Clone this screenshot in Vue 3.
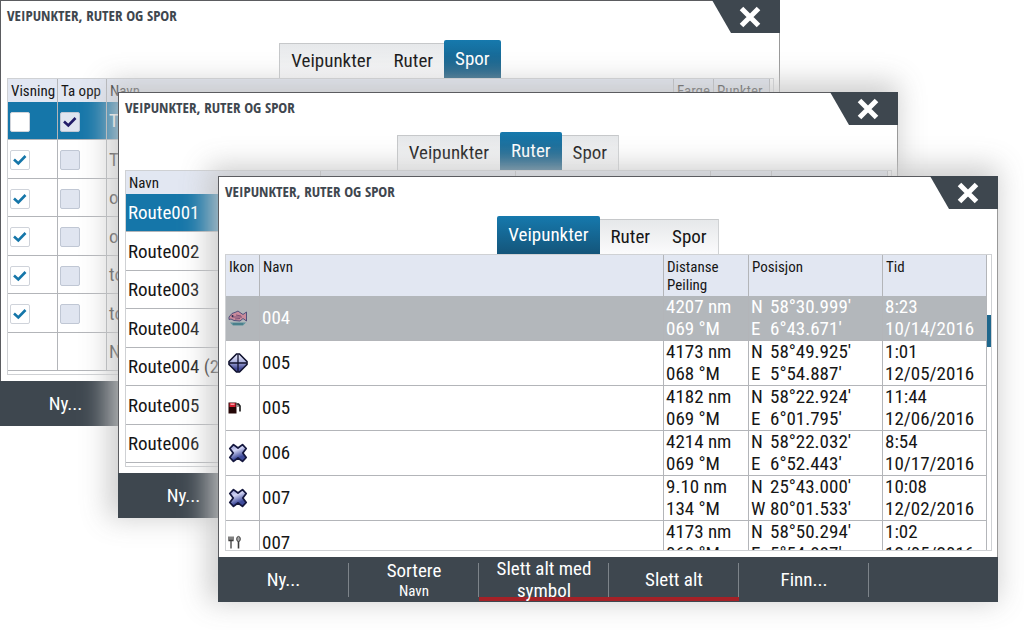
<script setup>
const tabs = ['Veipunkter', 'Ruter', 'Spor']

const tracks = [
  { shown: false, followed: true, name: 'Tr', selected: true },
  { shown: true, followed: false, name: 'Tr' },
  { shown: true, followed: false, name: 'o' },
  { shown: true, followed: false, name: 'o' },
  { shown: true, followed: false, name: 'to' },
  { shown: true, followed: false, name: 'to' },
  { blank: true, name: 'N' },
]

const routes = ['Route001', 'Route002', 'Route003', 'Route004', 'Route004 (2)', 'Route005', 'Route006']

const waypoints = [
  { icon: 'fish', name: '004', dist: '4207 nm', brg: '069 °M', lat: ['N', "58°30.999'"], lon: ['E', "6°43.671'"], time: '8:23', date: '10/14/2016', selected: true },
  { icon: 'diamond', name: '005', dist: '4173 nm', brg: '068 °M', lat: ['N', "58°49.925'"], lon: ['E', "5°54.887'"], time: '1:01', date: '12/05/2016' },
  { icon: 'fuel', name: '005', dist: '4182 nm', brg: '069 °M', lat: ['N', "58°22.924'"], lon: ['E', "6°01.795'"], time: '11:44', date: '12/06/2016' },
  { icon: 'cross', name: '006', dist: '4214 nm', brg: '069 °M', lat: ['N', "58°22.032'"], lon: ['E', "6°52.443'"], time: '8:54', date: '10/17/2016' },
  { icon: 'cross', name: '007', dist: '9.10 nm', brg: '134 °M', lat: ['N', "25°43.000'"], lon: ['W', "80°01.533'"], time: '10:08', date: '12/02/2016' },
  { icon: 'food', name: '007', dist: '4173 nm', brg: '068 °M', lat: ['N', "58°50.294'"], lon: ['E', "5°54.887'"], time: '1:02', date: '12/05/2016' },
]

const windows = [
  { id: 'tracks', active: 'Spor', actions: [{ label: 'Ny...' }] },
  { id: 'routes', active: 'Ruter', actions: [{ label: 'Ny...' }] },
  {
    id: 'waypoints',
    active: 'Veipunkter',
    actions: [
      { label: 'Ny...' },
      { label: 'Sortere', sub: 'Navn' },
      { label: 'Slett alt med symbol', danger: true },
      { label: 'Slett alt', danger: true },
      { label: 'Finn...' },
    ],
  },
]
</script>

<template>
  <main class="desktop">
    <section v-for="w in windows" :key="w.id" class="window" :class="w.id">
      <header class="head">
        <h2 class="title">VEIPUNKTER, RUTER OG SPOR</h2>
        <nav class="tabs">
          <button v-for="t in tabs" :key="t" type="button" class="tab" :class="{ active: t === w.active }">{{ t }}</button>
        </nav>
        <button type="button" class="close" aria-label="Lukk">
          <svg viewBox="0 0 24 24" width="24" height="24"><path d="M3.5 3.5L20.5 20.5M20.5 3.5L3.5 20.5" stroke="#fff" stroke-width="5" /></svg>
        </button>
      </header>

      <div class="list">
        <table v-if="w.id === 'tracks'" class="short">
          <colgroup><col class="c-show" /><col class="c-follow" /><col /><col class="c-color" /><col class="c-points" /></colgroup>
          <thead>
            <tr><th>Visning</th><th>Ta opp</th><th>Navn</th><th>Farge</th><th>Punkter</th></tr>
          </thead>
          <tbody>
            <tr v-for="(r, i) in tracks" :key="i" :class="{ selected: r.selected }">
              <td>
                <label v-if="!r.blank" class="check">
                  <input type="checkbox" :checked="r.shown" aria-label="Visning" />
                  <svg v-if="r.shown" viewBox="0 0 20 20" width="20" height="20"><path d="M4 9.5L8.3 13.5L15.5 6" /></svg>
                </label>
              </td>
              <td>
                <label v-if="!r.blank" class="check follow">
                  <input type="checkbox" :checked="r.followed" aria-label="Ta opp" />
                  <svg v-if="r.followed" viewBox="0 0 20 20" width="20" height="20"><path d="M4 9.5L8.3 13.5L15.5 6" /></svg>
                </label>
              </td>
              <td>{{ r.name }}</td><td></td><td></td>
            </tr>
          </tbody>
        </table>

        <table v-else-if="w.id === 'routes'" class="short">
          <colgroup><col class="c-name" /><col class="c-leg" /><col class="c-leg" /><col class="c-via" /><col /></colgroup>
          <thead>
            <tr><th>Navn</th><th></th><th></th><th></th><th></th></tr>
          </thead>
          <tbody>
            <tr v-for="(r, i) in routes" :key="r" :class="{ selected: i === 0 }">
              <td>{{ r }}</td><td></td><td></td><td></td><td></td>
            </tr>
          </tbody>
        </table>

        <table v-else class="tall">
          <colgroup><col class="c-icon" /><col /><col class="c-dist" /><col class="c-pos" /><col class="c-time" /></colgroup>
          <thead>
            <tr><th>Ikon</th><th>Navn</th><th>Distanse<br />Peiling</th><th>Posisjon</th><th>Tid</th></tr>
          </thead>
          <tbody>
            <tr v-for="(r, i) in waypoints" :key="i" :class="{ picked: r.selected }">
              <td class="icon">
                <svg v-if="r.icon === 'fish'" viewBox="0 0 20 20" width="20" height="20">
                  <path d="M2 14.5h16l-3 3H5z" fill="#5b929b" />
                  <path d="M5 16h10" stroke="#3a6f7c" />
                  <path d="M1 9L4 5.5L8 4L10 3L12 4.5L15 6.5L18.5 4V13L15 10.5L12 13L6 12.5L3 11L1 11.5z" fill="#c98b9b" stroke="#53507c" />
                  <path d="M4 9H14M8 7L13 8M7 11L12 10.5" stroke="#7b5076" />
                  <circle cx="4.5" cy="8" r="1" fill="#29264d" />
                </svg>
                <svg v-else-if="r.icon === 'diamond'" viewBox="0 0 20 20" width="20" height="20">
                  <defs><linearGradient id="dia" x1="0" y1="0" x2="0" y2="1"><stop offset="0.1" stop-color="#e2e4f8" /><stop offset="0.45" stop-color="#aab0dd" /><stop offset="0.8" stop-color="#454c98" /></linearGradient></defs>
                  <path d="M8.5 1H11.5L19 8.5V11.5L11.5 19H8.5L1 11.5V8.5z" fill="url(#dia)" stroke="#10122e" stroke-width="1.6" />
                  <path d="M10 1.5V18.5M1.5 10H18.5" stroke="#10122e" stroke-width="1.3" />
                </svg>
                <svg v-else-if="r.icon === 'fuel'" viewBox="0 0 20 20" width="20" height="20">
                  <path d="M0.5 4.5H8.5V15.5H0.5z" fill="#240607" />
                  <path d="M1.5 5H7.5V9H1.5z" fill="#d71f31" />
                  <path d="M2.5 5.5H6.5V7H2.5z" fill="#f0a0a5" />
                  <path d="M8.5 6H10.5L12 8V13.5" fill="none" stroke="#171717" stroke-width="1.6" />
                  <path d="M10 6V9" stroke="#333" />
                </svg>
                <svg v-else-if="r.icon === 'cross'" viewBox="0 0 20 20" width="20" height="20">
                  <defs><linearGradient id="crs" x1="0" y1="0" x2="0.4" y2="1"><stop offset="0.1" stop-color="#9da2d8" /><stop offset="0.4" stop-color="#d3d6f5" /><stop offset="0.85" stop-color="#3f4b9b" /></linearGradient></defs>
                  <path d="M5.5 1.6L1.8 5.5L5.2 10L1.8 14.5L5.5 18.4L10 15L14.5 18.4L18.2 14.5L14.8 10L18.2 5.5L14.5 1.6L10 5z" fill="url(#crs)" stroke="#15183f" stroke-width="1.8" stroke-linejoin="round" />
                </svg>
                <svg v-else viewBox="0 0 20 20" width="20" height="20">
                  <path d="M1 3.5V7.5H5V3.5M3 3.5V15.5" fill="none" stroke="#3d3d3d" stroke-width="1.3" />
                  <path d="M10.5 8V15.5" stroke="#3d3d3d" stroke-width="1.6" />
                  <ellipse cx="10.5" cy="6" rx="1.8" ry="2.6" fill="#aaa" stroke="#3d3d3d" />
                </svg>
              </td>
              <td>{{ r.name }}</td>
              <td>{{ r.dist }}<br />{{ r.brg }}</td>
              <td>
                <span class="hemi">{{ r.lat[0] }}</span>{{ r.lat[1] }}<br />
                <span class="hemi">{{ r.lon[0] }}</span>{{ r.lon[1] }}
              </td>
              <td>{{ r.time }}<br />{{ r.date }}</td>
            </tr>
          </tbody>
        </table>
        <div v-if="w.id === 'waypoints'" class="track"><div class="thumb"></div></div>
      </div>

      <footer class="actions">
        <button v-for="a in w.actions" :key="a.label" type="button" class="action" :class="{ danger: a.danger }">
          <span>{{ a.label }}</span>
          <small v-if="a.sub">{{ a.sub }}</small>
        </button>
      </footer>
    </section>
  </main>
</template>

<style>
body {
  background: #fff;
}
</style>

<style scoped>
.desktop {
  position: relative;
  min-height: 100vh;
  overflow: hidden;
  font-family: "Roboto Condensed", "Noto Sans", sans-serif;
  font-size: 19px;
  color: #161616;
}
.window {
  position: absolute;
  width: calc(100% - 244px);
  box-sizing: border-box;
  border: 1px solid #5b5c60;
  border-right-color: #999;
  border-bottom: 0;
  background: #fff;
}
.tracks { left: 0; top: 0; }
.routes { left: 118px; top: 92px; }
.waypoints { left: 218px; top: 176px; }
.routes,
.waypoints {
  box-shadow: -5px -5px 26px 5px rgba(200, 200, 200, 0.9);
}
.head {
  display: grid;
  grid-template-rows: 30px 47px;
}
.head > * { grid-column: 1; }
.title {
  grid-row: 1;
  margin: 0;
  padding-left: 6px;
  font-family: "Open Sans Condensed", "Noto Sans", sans-serif;
  font-size: 15px;
  line-height: 28px;
  font-weight: 700;
  color: #3f474f;
}
.tabs {
  grid-row: 2;
  display: flex;
  justify-content: center;
  align-items: flex-end;
}
button {
  border: 0;
  padding: 0;
  background: none;
  font: inherit;
  color: inherit;
}
.tab {
  height: 35px;
  padding: 0 11px 2px;
  border-top: 1px solid #c6c8ca;
  background: linear-gradient(#e6e8ea, #fbfbfc);
}
.tab:first-child { border-left: 1px solid #c6c8ca; }
.tab:last-child { border-right: 1px solid #d0d2d4; }
.tab.active {
  height: 38px;
  border: 0;
  border-radius: 2px 2px 0 0;
  background: linear-gradient(#1679ad, #14557a);
  color: #fff;
}
.close {
  grid-row: 1;
  justify-self: end;
  width: 68px;
  height: 33px;
  margin: -1px -1px 0 0;
  padding-left: 8px;
  background: #3e474f;
  clip-path: polygon(0 0, 100% 0, 100% 100%, 19px 100%);
}
.close svg { display: block; margin: 0 auto; }
.list {
  display: flex;
  height: 297px;
  box-sizing: border-box;
  margin: 0 5px 6px 6px;
  overflow: hidden;
  border: 1px solid #cfd1d4;
}
table {
  flex: 1;
  table-layout: fixed;
  border-collapse: separate;
  border-spacing: 0;
  width: 0;
  height: max-content;
}
th,
td {
  box-sizing: border-box;
  padding: 0 0 0 2px;
  overflow: hidden;
  border-right: 1px solid #b3b5b9;
  border-bottom: 1px solid #b3b5b9;
  text-align: left;
  white-space: nowrap;
}
th {
  padding: 3px 0 0 3px;
  border-bottom: 0;
  background: #e2e7f2;
  font-size: 15px;
  line-height: 18px;
  font-weight: 400;
  vertical-align: top;
}
.short { margin-right: 3px; }
.short th { height: 23px; }
.short td { height: 38px; }
.short tr:nth-child(even) td { height: 39px; }
.tall th { height: 41px; }
.tall td { height: 45px; line-height: 22px; }
.selected td { background: #1576a9; color: #fff; }
.picked td { background: #b3b7bb; color: #fff; }
.c-show { width: 50px; }
.c-follow { width: 49px; }
.c-color { width: 40px; }
.c-points { width: 56px; }
.c-name,
.c-leg { width: 195px; }
.c-via { width: 61px; }
.c-icon { width: 34px; }
.c-dist { width: 85px; }
.c-pos { width: 134px; }
.c-time { width: 104px; }
.routes td { border-right: 0; }
.icon svg { display: block; }
.hemi { display: inline-block; width: 19px; }
.check {
  display: inline-grid;
  vertical-align: middle;
}
.check > * { grid-area: 1 / 1; }
.check input {
  appearance: none;
  width: 20px;
  height: 20px;
  margin: 0;
  border: 1px solid #cfd3da;
  border-radius: 2px;
  background: #fff;
}
.check.follow input {
  border-color: #c0c7d4;
  background: #e0e5f0;
}
.check path {
  fill: none;
  stroke: #1576a9;
  stroke-width: 2.6;
}
.check.follow path { stroke: #221c68; }
.check svg { pointer-events: none; }
.track {
  width: 4px;
  padding-top: 60px;
}
.thumb {
  width: 4px;
  height: 32px;
  background: #1f678c;
}
.actions {
  display: flex;
  height: 45px;
  margin: 0 -1px;
  background: #3e474f;
  color: #fff;
}
.action {
  display: flex;
  flex: 0 0 131px;
  flex-direction: column;
  align-items: center;
  justify-content: center;
  padding: 0 8px;
  line-height: 22px;
  background:
    linear-gradient(#7d848a, #7d848a) right center / 1px 34px no-repeat;
}
.action + .action { flex-basis: 130px; }
.action span { max-width: 110px; }
.action small { font-size: 15px; line-height: 18px; }
.action.danger {
  background:
    linear-gradient(#7d848a, #7d848a) right center / 1px 34px no-repeat,
    linear-gradient(#a52127, #a52127) center bottom 1px / 100% 4px no-repeat;
}
.tracks .action,
.routes .action { background: none; }
</style>
